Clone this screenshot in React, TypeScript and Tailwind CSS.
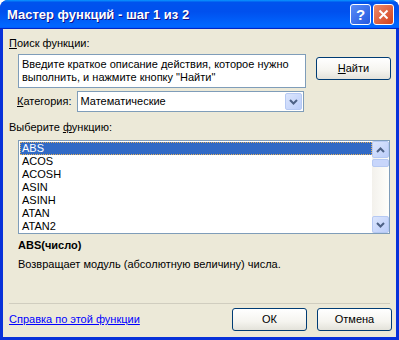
import React from 'react';

const FONT = { fontFamily: '"Liberation Sans", Arial, sans-serif' };

const functions = ['ABS', 'ACOS', 'ACOSH', 'ASIN', 'ASINH', 'ATAN', 'ATAN2'];

const XpButton: React.FC<{ children: React.ReactNode; className?: string }> = ({ children, className = '' }) => (
  <button
    type="button"
    className={`h-[23px] w-[75px] rounded-[3px] border border-[#003c74] bg-[linear-gradient(180deg,#ffffff,#f5f4ef_60%,#e3e2da)] text-[11px] text-black ${className}`}
  >
    {children}
  </button>
);

const Chevron: React.FC<{ up?: boolean }> = ({ up }) => (
  <svg width="9" height="6" viewBox="0 0 9 6" className={up ? 'rotate-180' : ''}>
    <path d="M1 1 L4.5 4.5 L8 1" stroke="#4d6185" strokeWidth="2" fill="none" />
  </svg>
);

const ScrollBtn: React.FC<{ up?: boolean }> = ({ up }) => (
  <div className="flex h-[17px] w-[17px] items-center justify-center rounded-[2px] border border-[#b6c9f3] bg-[linear-gradient(135deg,#dbe5fc,#bccefa)]">
    <Chevron up={up} />
  </div>
);

export default function App() {
  return (
    <div className="h-[340px] w-[399px] bg-white" style={FONT}>
      <div className="flex h-full w-full flex-col overflow-hidden rounded-t-[8px] bg-[#0831d9]">
        {/* title bar */}
        <div className="flex h-[29px] shrink-0 items-center justify-between bg-[linear-gradient(180deg,#0997ff,#0053ee_8%,#0050ee_40%,#0066ff_88%,#0066ff_93%,#005bff_95%,#0026c4_96%,#0026c4)] pl-[7px] pr-[5px]">
          <span className="text-[13px] font-bold text-white [text-shadow:1px_1px_#0f1089]">Мастер функций - шаг 1 из 2</span>
          <div className="flex gap-[2px]">
            <div className="flex h-[21px] w-[21px] items-center justify-center rounded-[3px] border border-white bg-[linear-gradient(135deg,#5a8cf6,#2458e0)] text-[15px] font-bold leading-none text-white">
              ?
            </div>
            <div className="flex h-[21px] w-[21px] items-center justify-center rounded-[3px] border border-white bg-[linear-gradient(135deg,#ea8a6b,#d4401c)]">
              <svg width="11" height="11" viewBox="0 0 11 11">
                <path d="M1.5 1.5 L9.5 9.5 M9.5 1.5 L1.5 9.5" stroke="white" strokeWidth="2" />
              </svg>
            </div>
          </div>
        </div>

        {/* client area */}
        <div className="mx-[3px] mb-[3px] flex flex-1 flex-col bg-[#ece9d8] text-[11px] text-black">
          <div className="ml-[6px] mt-[8px] leading-[13px]">
            <span className="underline">П</span>оиск функции:
          </div>

          <div className="ml-[15px] mt-[4px] flex items-start gap-[10px]">
            <div className="h-[34px] w-[288px] border border-[#7f9db9] bg-white px-[3px] pt-[3px] leading-[13px]">
              Введите краткое описание действия, которое нужно выполнить, и нажмите кнопку "Найти"
            </div>
            <XpButton className="mt-[3px]">
              <span className="underline">Н</span>айти
            </XpButton>
          </div>

          <div className="ml-[14px] mt-[3px] flex items-center gap-[5px]">
            <span>
              <span className="underline">К</span>атегория:
            </span>
            <div className="flex h-[21px] w-[227px] items-center justify-between border border-[#7f9db9] bg-white pl-[3px] pr-[1px]">
              <span>Математические</span>
              <div className="flex h-[17px] w-[17px] items-center justify-center rounded-[2px] border border-[#b6c9f3] bg-[linear-gradient(135deg,#dbe5fc,#bccefa)]">
                <Chevron />
              </div>
            </div>
          </div>

          <div className="ml-[6px] mt-[9px] leading-[13px]">
            Выберите <span className="underline">ф</span>ункцию:
          </div>

          <div className="ml-[15px] mt-[6px] flex h-[94px] w-[372px] border border-[#7f9db9] bg-white">
            <div className="flex-1 pt-[1px] pl-[1px]">
              {functions.map((f, i) => (
                <div
                  key={f}
                  className={`h-[13px] pl-[2px] leading-[13px] ${i === 0 ? 'bg-[#316ac5] text-white outline-1 -outline-offset-1 outline-dotted outline-[#e0b060]' : ''}`}
                >
                  {f}
                </div>
              ))}
            </div>
            <div className="flex w-[17px] flex-col bg-[linear-gradient(90deg,#f3f1ec,#fefefb)]">
              <ScrollBtn up />
              <div className="mt-[1px] h-[8px] w-[17px] rounded-[2px] border border-[#b6c9f3] bg-[#c8d6fb]" />
              <div className="flex-1" />
              <ScrollBtn />
            </div>
          </div>

          <div className="ml-[15px] mt-[5px] font-bold leading-[13px]">ABS(число)</div>
          <div className="ml-[15px] mt-[6px] leading-[13px]">Возвращает модуль (абсолютную величину) числа.</div>

          <div className="flex-1" />
          <div className="mx-[6px] h-px bg-[#d0cdbf]" />
          <div className="mb-[6px] mt-[4px] flex items-center pl-[6px] pr-[4px]">
            <a className="flex-1 text-[#0000ff] underline">Справка по этой функции</a>
            <XpButton>ОК</XpButton>
            <XpButton className="ml-[10px]">Отмена</XpButton>
          </div>
        </div>
      </div>
    </div>
  );
}
